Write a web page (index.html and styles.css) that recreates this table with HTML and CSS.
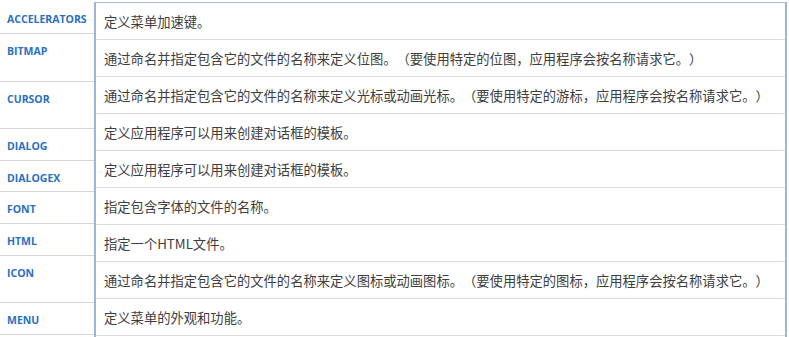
FILE: index.html
```html
<!DOCTYPE html>
<html lang="zh-CN">
<head>
<meta charset="utf-8">
<link rel="stylesheet" href="styles.css">
</head>
<body>
<div class="sheet">
  <div class="names">
    <div class="name h32">ACCELERATORS</div>
    <div class="name h48">BITMAP</div>
    <div class="name h47">CURSOR</div>
    <div class="name h32">DIALOG</div>
    <div class="name h31">DIALOGEX</div>
    <div class="name h32">FONT</div>
    <div class="name h32">HTML</div>
    <div class="name h47">ICON</div>
    <div class="name h32">MENU</div>
  </div>
  <div class="descs">
    <div class="desc">定义菜单加速键。</div>
    <div class="desc">通过命名并指定包含它的文件的名称来定义位图。（要使用特定的位图，应用程序会按名称请求它。）</div>
    <div class="desc">通过命名并指定包含它的文件的名称来定义光标或动画光标。（要使用特定的游标，应用程序会按名称请求它。）</div>
    <div class="desc">定义应用程序可以用来创建对话框的模板。</div>
    <div class="desc">定义应用程序可以用来创建对话框的模板。</div>
    <div class="desc">指定包含字体的文件的名称。</div>
    <div class="desc">指定一个HTML文件。</div>
    <div class="desc">通过命名并指定包含它的文件的名称来定义图标或动画图标。（要使用特定的图标，应用程序会按名称请求它。）</div>
    <div class="desc">定义菜单的外观和功能。</div>
  </div>
</div>
</body>
</html>
```
FILE: styles.css
```css
html, body {
  margin: 0;
  padding: 0;
  background: #ffffff;
}

.sheet {
  display: flex;
  width: 789px;
  height: 337px;
  padding-top: 2px;
  box-sizing: border-box;
  overflow: hidden;
}

.names {
  width: 94px;
  flex: none;
  display: flex;
  flex-direction: column;
}

.name {
  box-sizing: border-box;
  border-bottom: 1px solid #d4d8de;
  padding: 11px 0 0 7px;
  font-family: "Open Sans", "Noto Sans", sans-serif;
  font-weight: 700;
  font-size: 10.5px;
  line-height: 12px;
  color: #2a70c0;
  white-space: nowrap;
}

.h31 { height: 31px; }
.h32 { height: 32px; }
.h47 { height: 47px; }
.h48 { height: 48px; }

.descs {
  width: 693px;
  flex: none;
  display: flex;
  flex-direction: column;
  border-top: 1px solid #a9bedd;
  border-left: 2px solid #9fb5d8;
  border-right: 2px solid #9fb5d8;
  box-sizing: border-box;
}

.desc {
  height: 37px;
  box-sizing: border-box;
  border-bottom: 1px solid #dcdcdc;
  display: flex;
  align-items: center;
  padding-left: 8px;
  font-family: "Noto Sans CJK SC", "Noto Sans", sans-serif;
  font-size: 13.3px;
  color: #3e3e3e;
  white-space: nowrap;
  text-spacing-trim: space-all;
}
```
